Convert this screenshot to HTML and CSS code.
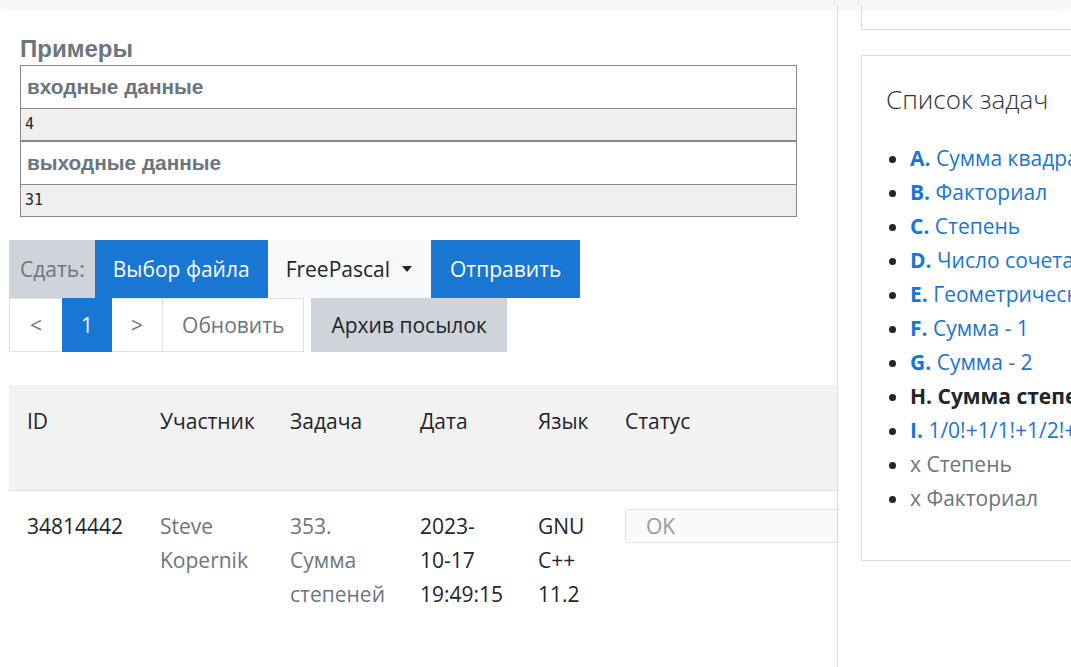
FILE: index.html
```html
<!DOCTYPE html>
<html lang="ru">
<head>
<meta charset="utf-8">
<title>Задача</title>
<link rel="stylesheet" href="styles.css">
</head>
<body>
<div class="topbar"></div>
<div class="layout">
  <main class="main">
    <section class="statement">
      <div class="section-title">Примеры</div>
      <div class="sample">
        <div class="sample-title">входные данные</div>
        <pre class="sample-data">4</pre>
      </div>
      <div class="sample sample-next">
        <div class="sample-title">выходные данные</div>
        <pre class="sample-data">31</pre>
      </div>
    </section>

    <div class="submit-row">
      <span class="seg seg-label">Сдать:</span>
      <span class="seg seg-blue">Выбор файла</span>
      <span class="seg seg-light">FreePascal <span class="caret"></span></span>
      <span class="seg seg-blue">Отправить</span>
    </div>

    <div class="pager-row">
      <div class="pager">
        <span class="pg pg-muted">&lt;</span>
        <span class="pg pg-active">1</span>
        <span class="pg pg-muted">&gt;</span>
        <span class="pg pg-muted">Обновить</span>
      </div>
      <span class="archive">Архив посылок</span>
    </div>

    <div class="runs">
      <table class="runs-table">
        <colgroup>
          <col class="c-id"><col class="c-user"><col class="c-task"><col class="c-date"><col class="c-lang"><col class="c-status">
        </colgroup>
        <thead>
          <tr>
            <th>ID</th><th>Участник</th><th>Задача</th><th>Дата</th><th>Язык</th><th>Статус</th>
          </tr>
        </thead>
        <tbody>
          <tr>
            <td>34814442</td>
            <td class="muted">Steve Kopernik</td>
            <td class="muted">353. Сумма степеней</td>
            <td>2023-<br>10-17<br>19:49:15</td>
            <td>GNU<br>C++<br>11.2</td>
            <td><div class="status-box">OK</div></td>
          </tr>
        </tbody>
      </table>
    </div>
  </main>

  <aside class="sidebar">
    <div class="card card-top"></div>
    <div class="card card-list">
      <h2 class="card-title">Список задач</h2>
      <ul class="tasks">
        <li><a class="task-link"><b>A.</b> Сумма квадратов</a></li>
        <li><a class="task-link"><b>B.</b> Факториал</a></li>
        <li><a class="task-link"><b>C.</b> Степень</a></li>
        <li><a class="task-link"><b>D.</b> Число сочетаний</a></li>
        <li><a class="task-link"><b>E.</b> Геометрическая прогрессия</a></li>
        <li><a class="task-link"><b>F.</b> Сумма - 1</a></li>
        <li><a class="task-link"><b>G.</b> Сумма - 2</a></li>
        <li class="task-current">H. Сумма степеней</li>
        <li><a class="task-link"><b>I.</b> 1/0!+1/1!+1/2!+...</a></li>
        <li><span class="task-extra">x Степень</span></li>
        <li><span class="task-extra">x Факториал</span></li>
      </ul>
    </div>
  </aside>
</div>
</body>
</html>
```

FILE: styles.css
```css
html, body {
  margin: 0;
  padding: 0;
  background: #fff;
  overflow: hidden;
  height: 667px;
}

body {
  font-family: "Open Sans", "Noto Sans", sans-serif;
  font-size: 21px;
  line-height: 34px;
  color: #212529;
}

.topbar {
  height: 6px;
  background: #f6f6f6;
  box-shadow: 0 2px 8px rgba(0, 0, 0, 0.07);
  position: relative;
  z-index: 2;
}

.layout {
  display: flex;
  height: 661px;
}

.main {
  flex: none;
  width: 838px;
  box-sizing: border-box;
  padding-left: 9px;
  border-right: 1px solid #dcdcdc;
  overflow: hidden;
}

/* statement */
.statement {
  padding: 27px 0 0 11px;
  width: 777px;
}

.section-title {
  font-family: "Liberation Sans", Arial, sans-serif;
  font-weight: bold;
  font-size: 24px;
  line-height: 32px;
  color: #6c757d;
}

.sample {
  border: 1px solid #888;
}

.sample-next {
  border-top-width: 2px;
  margin-top: -1px;
}

.sample-title {
  font-family: "Liberation Sans", Arial, sans-serif;
  font-weight: bold;
  font-size: 20.8px;
  line-height: 24px;
  color: #6c757d;
  padding: 9px 6px 9px;
  border-bottom: 1px solid #888;
}

.sample-data {
  margin: 0;
  background: #efefef;
  font-family: "DejaVu Sans Mono", "Liberation Mono", monospace;
  font-size: 15px;
  line-height: 31px;
  padding: 0 4px;
  color: #222;
}

/* submit row */
.submit-row {
  display: flex;
  margin-top: 23px;
  height: 58px;
}

.seg {
  display: flex;
  align-items: center;
  padding: 0 18px;
  white-space: nowrap;
}

.seg-label {
  background: #ced4da;
  color: #6c757d;
  padding: 0 10px 0 11px;
}

.seg-blue {
  background: #1976d2;
  color: #fff;
}

.seg-light {
  background: #f8f9fa;
  color: #212529;
  padding-right: 19px;
}

.seg-light + .seg-blue {
  padding: 0 19px;
}

.caret {
  display: inline-block;
  width: 0;
  height: 0;
  margin-left: 12px;
  border-left: 5px solid transparent;
  border-right: 5px solid transparent;
  border-top: 6px solid #212529;
}

/* pager */
.pager-row {
  display: flex;
  height: 54px;
  gap: 7px;
}

.pager {
  display: flex;
}

.pg {
  display: flex;
  align-items: center;
  justify-content: center;
  padding: 0 19px;
  border: 1px solid #dee2e6;
  margin-left: -1px;
  background: #fff;
}

.pg:first-child {
  margin-left: 0;
  padding: 0 20px;
}

.pg-muted {
  color: #6c757d;
}

.pg-active {
  background: #1976d2;
  border-color: #1976d2;
  color: #fff;
  z-index: 1;
  padding: 0 18px;
}

.archive {
  display: flex;
  align-items: center;
  padding: 0 20px;
  background: #ced4da;
  color: #212529;
}

/* runs table */
.runs {
  margin-top: 33px;
}

.runs-table {
  border-collapse: collapse;
  table-layout: fixed;
  width: 1000px;
}

.c-id { width: 133px; }
.c-user { width: 130px; }
.c-task { width: 130px; }
.c-date { width: 118px; }
.c-lang { width: 87px; }
.c-status { width: 402px; }

.runs-table th {
  background: #f2f2f2;
  font-weight: normal;
  text-align: left;
  vertical-align: top;
  padding: 19px 18px 52px;
  border-bottom: 1px solid #dee2e6;
}

.runs-table td {
  vertical-align: top;
  padding: 18px 18px;
}

.muted {
  color: #6c757d;
}

.status-box {
  box-sizing: border-box;
  border: 1px solid #dee2e6;
  border-radius: 3px;
  background: #fafafa;
  color: #999;
  padding: 0 20px;
  height: 34px;
  line-height: 32px;
}

/* sidebar */
.sidebar {
  flex: 1;
  padding-left: 23px;
  overflow: hidden;
}

.card {
  border: 1px solid #dcdcdc;
  width: 400px;
  box-sizing: border-box;
}

.card-top {
  border-top: none;
  height: 24px;
}

.card-list {
  margin-top: 25px;
  height: 506px;
  padding: 23px 0 0 24px;
}

.card-title {
  margin: 0 0 22px;
  font-size: 26px;
  font-weight: 300;
  line-height: 40px;
  color: #333;
}

.tasks {
  margin: 0;
  padding-left: 24px;
  white-space: nowrap;
}

.tasks li {
  line-height: 34px;
}

.task-link {
  color: #1976d2;
  text-decoration: none;
}

.task-current {
  font-weight: bold;
}

.task-extra {
  color: #6c757d;
}
```
